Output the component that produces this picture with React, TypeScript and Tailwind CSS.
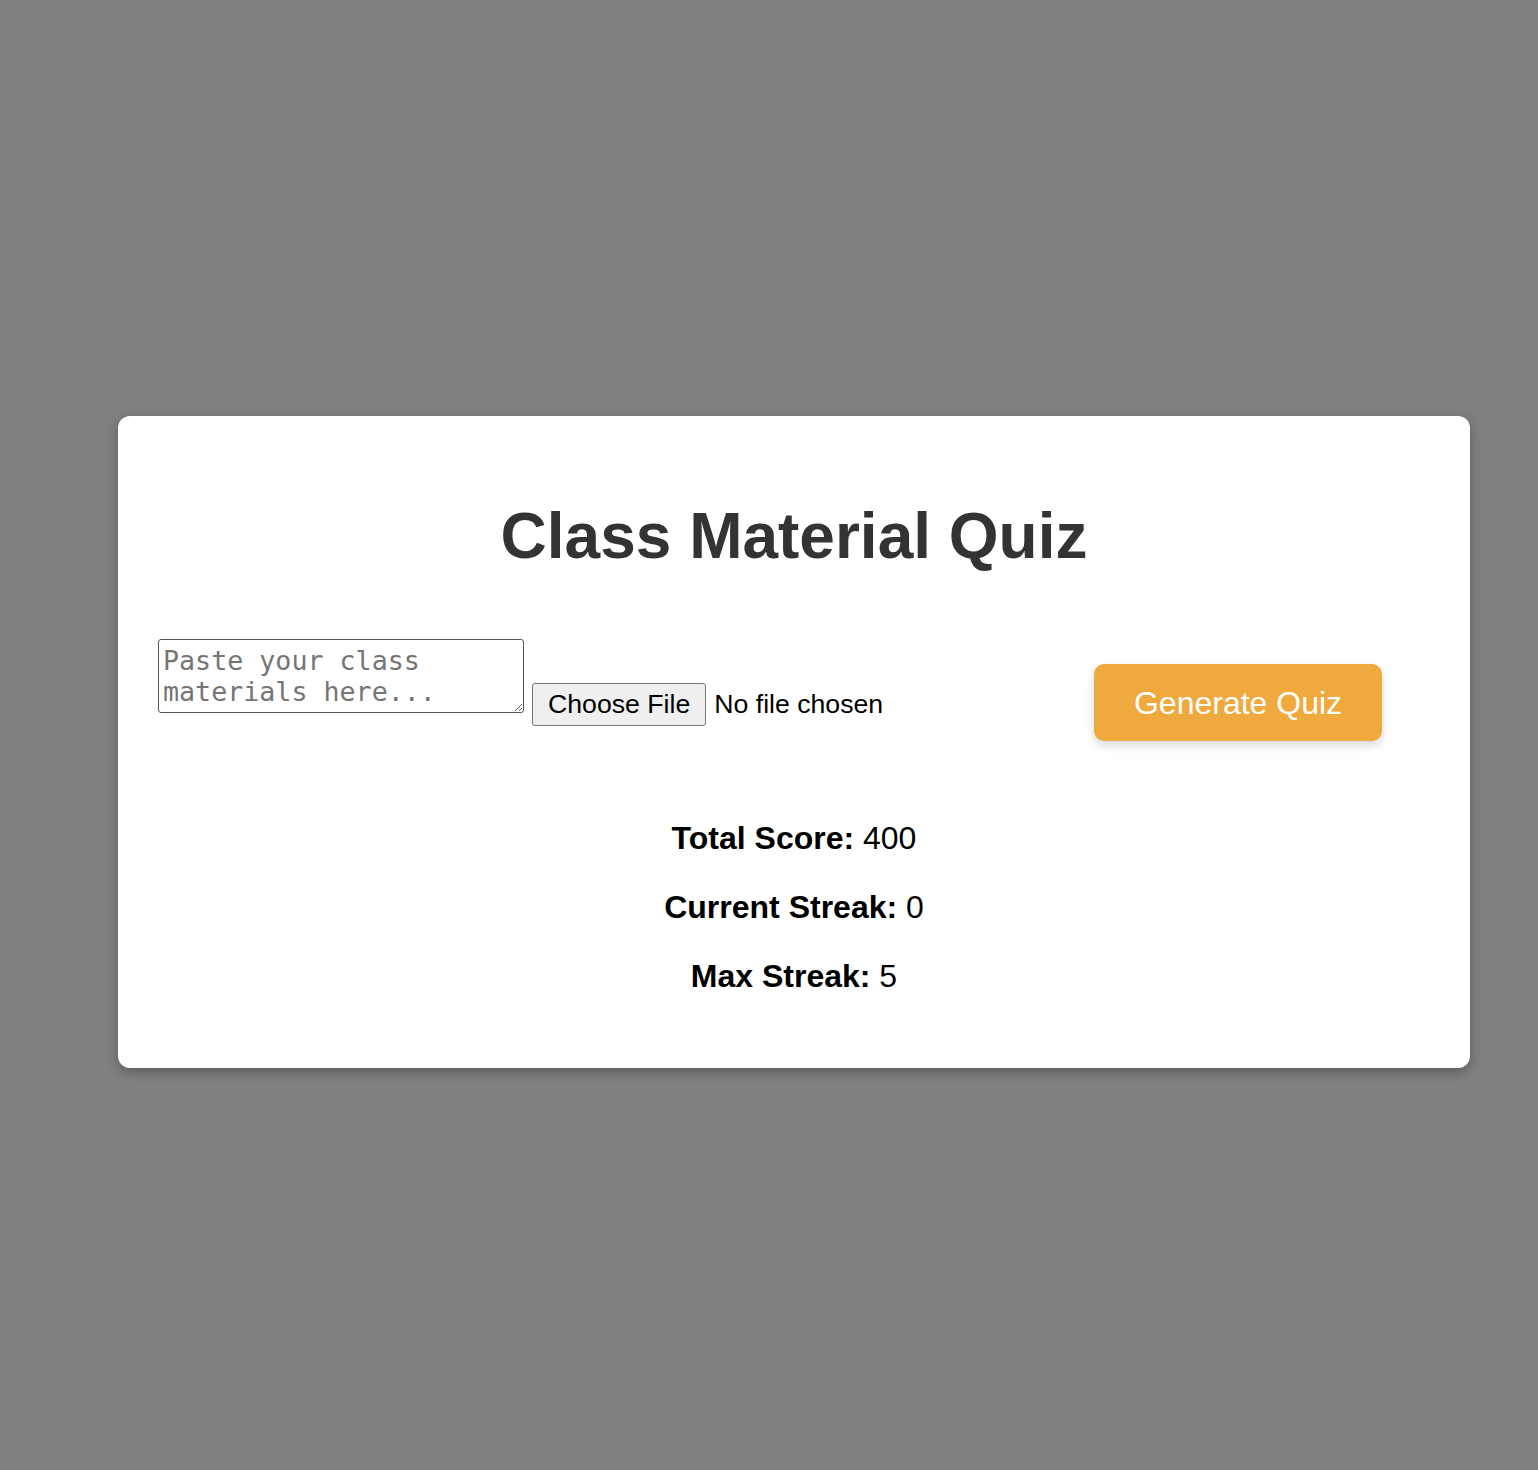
export default function App() {
  return (
    <div className="min-h-[1470px] bg-[#808080] pt-[416px] pl-[118px] font-['Liberation_Sans',Arial,sans-serif]">
      <div className="w-[1352px] h-[652px] bg-white rounded-[12px] shadow-[0_4px_12px_rgba(0,0,0,0.3)] px-[40px] pt-[40px]">
        <h1 className="mt-[43px] text-center text-[64px] leading-[74px] font-bold text-[#333333]">
          Class Material Quiz
        </h1>

        <div className="mt-[66px] flex items-start">
          <textarea
            placeholder="Paste your class materials here..."
            className="w-[366px] h-[74px] border-[1.5px] border-[#555555] rounded-[3px] px-[4px] py-[5px] font-['DejaVu_Sans_Mono',monospace] text-[26.67px] leading-[31px] text-black placeholder:text-[#757575]"
          />
          <input
            type="file"
            className="ml-[8px] mt-[44px] w-[400px] text-[26.67px] leading-[31px] text-black file:mr-[8px] file:h-[43px] file:px-[15px] file:border file:border-[#767676] file:rounded-[3px] file:bg-[#efefef] file:text-black"
          />
          <button className="ml-[162px] mt-[25px] w-[288px] h-[77px] rounded-[10px] bg-[#f0a93c] text-white text-[32px] shadow-[0_5px_10px_rgba(0,0,0,0.15)]">
            Generate Quiz
          </button>
        </div>

        <div className="mt-[79px] text-center text-[32px] leading-[37px] text-black">
          <p>
            <span className="font-bold">Total Score:</span> 400
          </p>
          <p className="mt-[32px]">
            <span className="font-bold">Current Streak:</span> 0
          </p>
          <p className="mt-[32px]">
            <span className="font-bold">Max Streak:</span> 5
          </p>
        </div>
      </div>
    </div>
  )
}
